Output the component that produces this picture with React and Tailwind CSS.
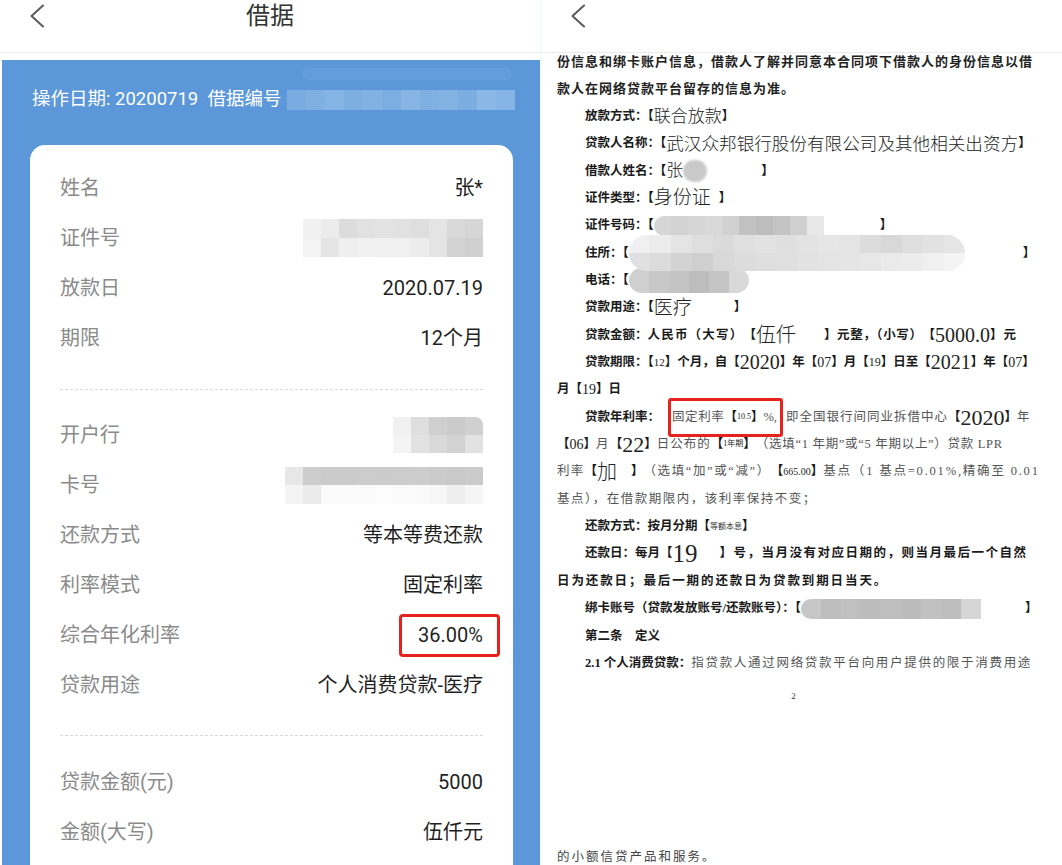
import React from "react";

const Chevron = () => (
  <svg width="16" height="24" viewBox="0 0 16 24" fill="none">
    <path d="M14 1.5L2.5 12L14 22.5" stroke="#5a5a5a" strokeWidth="2" strokeLinecap="round" strokeLinejoin="round" />
  </svg>
);

const Mosaic = ({ rows, cell, h, className = "" }) => (
  <span className={`inline-flex flex-col overflow-hidden shrink-0 ${className}`}>
    {rows.map((row, r) => (
      <span key={r} className="flex" style={{ height: h / rows.length }}>
        {row.map((c, i) => (
          <span key={i} className="h-full shrink-0" style={{ background: c, width: cell }} />
        ))}
      </span>
    ))}
  </span>
);

const Row = ({ label, children }) => (
  <div className="h-[50px] flex items-center justify-between">
    <span className="text-[20px] text-[#8a8a8a]">{label}</span>
    <span className="text-[20px] text-[#1f1f1f] flex items-center">{children}</span>
  </div>
);

const Dash = () => <div className="border-t border-dashed border-[#d9d9d9]" />;

const L = ({ children, t = "" }) => <span className={`text-[12.5px] font-semibold text-[#1a1a1a] ${t}`}>{children}</span>;
const N = ({ children, t = "tracking-[1.2px]" }) => <span className={`text-[12.5px] text-[#555] ${t}`}>{children}</span>;
const V = ({ children, s = "text-[17px]" }) => <span className={`${s} font-light text-[#222]`}>{children}</span>;
const D = ({ children, s = "text-[14px]" }) => (
  <span className={`${s} font-['Liberation_Serif',serif] text-[#222]`}>{children}</span>
);
const Line = ({ indent, children }) => (
  <div className={`h-[27.35px] flex items-center whitespace-nowrap ${indent ? "pl-[28px]" : ""}`}>{children}</div>
);
const Gap = ({ w }) => <span className="inline-block shrink-0" style={{ width: w }} />;

export default function App() {
  return (
    <div className="w-[1062px] h-[865px] flex overflow-hidden bg-white font-[Roboto,'Noto_Sans_CJK_SC',sans-serif]">
      {/* Left phone */}
      <div className="w-[540px] h-full flex flex-col bg-white">
        <div className="h-[53px] shrink-0 border-b border-[#ececec] grid grid-cols-[1fr_auto_1fr] items-center">
          <div className="pl-[29px] flex items-center -mt-[20px]">
            <Chevron />
          </div>
          <div className="text-[24px] text-[#333] pb-[16px] -mt-[4px]">借据</div>
          <div />
        </div>
        <div className="h-[7px] shrink-0" />
        <div className="flex-1 ml-[2px] bg-[#5b97d9] pl-[28px] pr-[27px] flex flex-col relative">
          <div className="absolute left-[300px] top-[8px] w-[210px] h-[12px] rounded-full bg-[#66a0dc] opacity-70" />
          <div className="h-[85px] shrink-0 flex items-center pb-[5px] text-white text-[18.5px] whitespace-nowrap">
            <span className="pl-[2px]">操作日期: 20200719&nbsp;&nbsp;借据编号</span>
            <Mosaic
              className="ml-[6px] -mr-[6px]"
              h={20}
              cell={19}
              rows={[["#7aace0", "#80b0e2", "#86b4e4", "#7eafe1", "#82b2e3", "#7daee1", "#88b5e4", "#80b0e2", "#84b3e3", "#7cade1", "#8ab7e5", "#86b4e4"]]}
            />
          </div>
          <div className="flex-1 bg-white rounded-t-[15px] px-[30px] pt-[18px]">
            <Row label="姓名">张*</Row>
            <Row label="证件号">
              <Mosaic
                h={38}
                cell={18}
                rows={[
                  ["#f1f1f1", "#ececec", "#dcdcdc", "#e1e1e1", "#e3e3e3", "#e1e1e1", "#dedede", "#e4e4e4", "#d9d9d9", "#d6d6d6"],
                  ["#f3f3f3", "#e4e4e4", "#efefef", "#f1f1f1", "#f0f0f0", "#f0f0f0", "#ececec", "#e4e4e4", "#d2d2d2", "#d0d0d0"],
                ]}
              />
            </Row>
            <Row label="放款日">2020.07.19</Row>
            <Row label="期限">12个月</Row>
            <div className="h-[26px]" />
            <Dash />
            <div className="h-[20px]" />
            <Row label="开户行">
              <Mosaic
                className="rounded-tr-[8px]"
                h={36}
                cell={18}
                rows={[
                  ["#f1f1f1", "#dedede", "#cfcfcf", "#cbcbcb", "#d0d0d0"],
                  ["#f4f4f4", "#e2e2e2", "#d9d9d9", "#d2d2d2", "#e2e2e2"],
                ]}
              />
            </Row>
            <Row label="卡号">
              <Mosaic
                h={37}
                cell={18}
                rows={[
                  ["#e7e7e7", "#cdcdcd", "#cbcbcb", "#cbcbcb", "#cccccc", "#cbcbcb", "#cccccc", "#cdcdcd", "#cbcbcb", "#c9c9c9", "#cbcbcb"],
                  ["#f4f4f4", "#ebebeb", "#fbfbfb", "#fbfbfb", "#fbfbfb", "#fcfcfc", "#fbfbfb", "#fafafa", "#f7f7f7", "#eeeeee", "#f5f5f5"],
                ]}
              />
            </Row>
            <Row label="还款方式">等本等费还款</Row>
            <Row label="利率模式">固定利率</Row>
            <Row label="综合年化利率">
              <span className="h-[43px] flex items-center border-[3px] border-[#e5231c] rounded-[4px] pl-[16px] pr-[14px] -mr-[17px]">
                36.00%
              </span>
            </Row>
            <Row label="贷款用途">个人消费贷款-医疗</Row>
            <div className="h-[25px]" />
            <Dash />
            <div className="h-[21px]" />
            <Row label="贷款金额(元)">5000</Row>
            <Row label="金额(大写)">伍仟元</Row>
          </div>
        </div>
      </div>

      {/* Right phone */}
      <div className="flex-1 h-full flex flex-col bg-white border-l border-[#eef9f9] font-['Liberation_Serif','Noto_Sans_CJK_SC',serif]">
        <div className="h-[53px] shrink-0 border-b border-[#ececec] flex items-center pl-[29px] bg-white relative z-10">
          <div className="-mt-[20px]">
            <Chevron />
          </div>
        </div>
        <div className="-mt-[5px] pl-[16px] flex flex-col">
          <Line>
            <span className="text-[13px] tracking-[1px] font-semibold text-[#222]">
              份信息和绑卡账户信息，借款人了解并同意本合同项下借款人的身份信息以借
            </span>
          </Line>
          <Line>
            <span className="text-[13px] tracking-[1px] font-semibold text-[#222]">款人在网络贷款平台留存的信息为准。</span>
          </Line>
          <Line indent>
            <L>放款方式：【</L>
            <V>联合放款</V>
            <L>】</L>
          </Line>
          <Line indent>
            <L>贷款人名称：【</L>
            <V s="text-[17.6px]">武汉众邦银行股份有限公司及其他相关出资方</V>
            <L>】</L>
          </Line>
          <Line indent>
            <L>借款人姓名：【</L>
            <V>张</V>
            <span className="inline-block w-[24px] h-[22px] rounded-full bg-[#c9c9c9] blur-[1px] shrink-0" />
            <Gap w={54} />
            <L>】</L>
          </Line>
          <Line indent>
            <L>证件类型：【</L>
            <V s="text-[19px]">身份证</V>
            <Gap w={8} />
            <L>】</L>
          </Line>
          <Line indent>
            <L>证件号码：【</L>
            <Mosaic
              className="rounded-l-full"
              h={20}
              cell={17}
              rows={[["#d6d6d6", "#d2d2d2", "#d6d6d6", "#d9d9d9", "#d1d1d1", "#c2c2c2", "#bdbdbd", "#c3c3c3", "#cfcfcf", "#e8e8e8"]]}
            />
            <Gap w={56} />
            <L>】</L>
          </Line>
          <Line indent>
            <L>住所：【</L>
            <Mosaic
              className="rounded-full -my-[5px] blur-[0.5px]"
              h={36}
              cell={21}
              rows={[
                ["#f0f0f0", "#ececec", "#e4e4e4", "#dedede", "#dadada", "#e0e0e0", "#e2e2e2", "#dfdfdf", "#e3e3e3", "#e6e6e6", "#e4e4e4", "#dcdcdc", "#d8d8d8", "#dedede", "#e2e2e2", "#e6e6e6"],
                ["#e0e0e0", "#dcdcdc", "#d3d3d3", "#cfcfcf", "#d8d8d8", "#dcdcdc", "#dedede", "#e0e0e0", "#e2e2e2", "#e4e4e4", "#e5e5e5", "#e7e7e7", "#eaeaea", "#ececec", "#f0f0f0", "#f4f4f4"],
              ]}
            />
            <Gap w={58} />
            <L>】</L>
          </Line>
          <Line indent>
            <L>电话：【</L>
            <Mosaic
              className="rounded-full"
              h={25}
              cell={20}
              rows={[["#cfcfcf", "#c8c8c8", "#c4c4c4", "#bdbdbd", "#c5c5c5", "#d9d9d9"]]}
            />
          </Line>
          <Line indent>
            <L>贷款用途：【</L>
            <V s="text-[19px]">医疗</V>
            <Gap w={42} />
            <L>】</L>
          </Line>
          <Line indent>
            <L>贷款金额：</L>
            <L t="font-medium tracking-[1.2px]">人民币（大写）</L>
            <L>【</L>
            <V s="text-[20px]">伍仟</V>
            <Gap w={28} />
            <L t="font-medium tracking-[0.6px]">】元整，（小写）</L>
            <L>【</L>
            <D s="text-[20px]">5000.0</D>
            <L t="tracking-[1px]">】元</L>
          </Line>
          <Line indent>
            <L>贷款期限：【</L>
            <D s="text-[11px]">12</D>
            <L>】个月，自【</L>
            <D s="text-[20px]">2020</D>
            <L>】年【</L>
            <D>07</D>
            <L>】月【 </L>
            <D s="text-[12px]">19</D>
            <L>】日至【</L>
            <D s="text-[20px]">2021</D>
            <L>】年【</L>
            <D>07</D>
            <L>】</L>
          </Line>
          <Line>
            <L>月【</L>
            <D>19</D>
            <L>】日</L>
          </Line>
          <Line indent>
            <L>贷款年利率：</L>
            <span className="h-[39px] flex items-center border-[3px] border-[#e5231c] rounded-[3px] pl-[1px] pr-[3px] ml-[8px] mr-[3px]">
              <N t="tracking-[0.6px]">固定利率</N>
              <L>【</L>
              <D s="text-[8px]">10.5</D>
              <L>】</L>
              <N t="">%,</N>
            </span>
            <N t="tracking-[1px]">即全国银行间同业拆借中心</N>
            <L>【</L>
            <D s="text-[22px]">2020</D>
            <L>】</L>
            <N>年</N>
          </Line>
          <Line>
            <L>【</L>
            <D>06</D>
            <L>】</L>
            <N>月</N>
            <L>【</L>
            <D s="text-[22px]">22</D>
            <L>】</L>
            <N t="tracking-[1px]">日公布的</N>
            <L>【</L>
            <span className="text-[8px] text-[#222]">1年期</span>
            <L>】</L>
            <N t="tracking-[0.7px]">（选填“1 年期”或“5 年期以上”）贷款 LPR</N>
          </Line>
          <Line>
            <N>利率</N>
            <L>【</L>
            <V s="text-[20px]">加</V>
            <Gap w={14} />
            <L>】</L>
            <N t="tracking-[1.6px]">（选填“加”或“减”）</N>
            <L>【</L>
            <D s="text-[10px]">665.00</D>
            <L>】</L>
            <N t="tracking-[1.8px]">基点（1 基点=0.01%,精确至 0.01</N>
          </Line>
          <Line>
            <N t="tracking-[1.5px]">基点），在借款期限内，该利率保持不变；</N>
          </Line>
          <Line indent>
            <L>还款方式：按月分期【</L>
            <span className="text-[8px] text-[#333]">等额本息</span>
            <L>】</L>
          </Line>
          <Line indent>
            <L>还款日：每月【</L>
            <D s="text-[25px]">19</D>
            <Gap w={22} />
            <span className="text-[12.5px] font-semibold text-[#1a1a1a] tracking-[1.5px]">】号，当月没有对应日期的，则当月最后一个自然</span>
          </Line>
          <Line>
            <span className="text-[12.5px] font-semibold text-[#1a1a1a] tracking-[1.9px]">日为还款日；最后一期的还款日为贷款到期日当天。</span>
          </Line>
          <Line indent>
            <L>绑卡账号（贷款发放账号/还款账号）：【</L>
            <Mosaic
              className="rounded-l-full"
              h={20}
              cell={20}
              rows={[["#c6c6c6", "#bdbdbd", "#c0c0c0", "#bcbcbc", "#bfbfbf", "#bbbbbb", "#c1c1c1", "#bdbdbd", "#d6d6d6"]]}
            />
            <Gap w={44} />
            <L>】</L>
          </Line>
          <Line indent>
            <L>第二条　定义</L>
          </Line>
          <Line indent>
            <L>2.1 个人消费贷款：</L>
            <N t="tracking-[1.7px]">指贷款人通过网络贷款平台向用户提供的限于消费用途</N>
          </Line>
          <div className="w-[473px] text-center text-[9px] text-[#333] leading-[12px] mt-[13px]">2</div>
        </div>
        <div className="flex-1" />
        <div className="pl-[16px] h-[16px] leading-[16px] text-[12.5px] text-[#444] tracking-[2px]">的小额信贷产品和服务。</div>
      </div>
    </div>
  );
}
